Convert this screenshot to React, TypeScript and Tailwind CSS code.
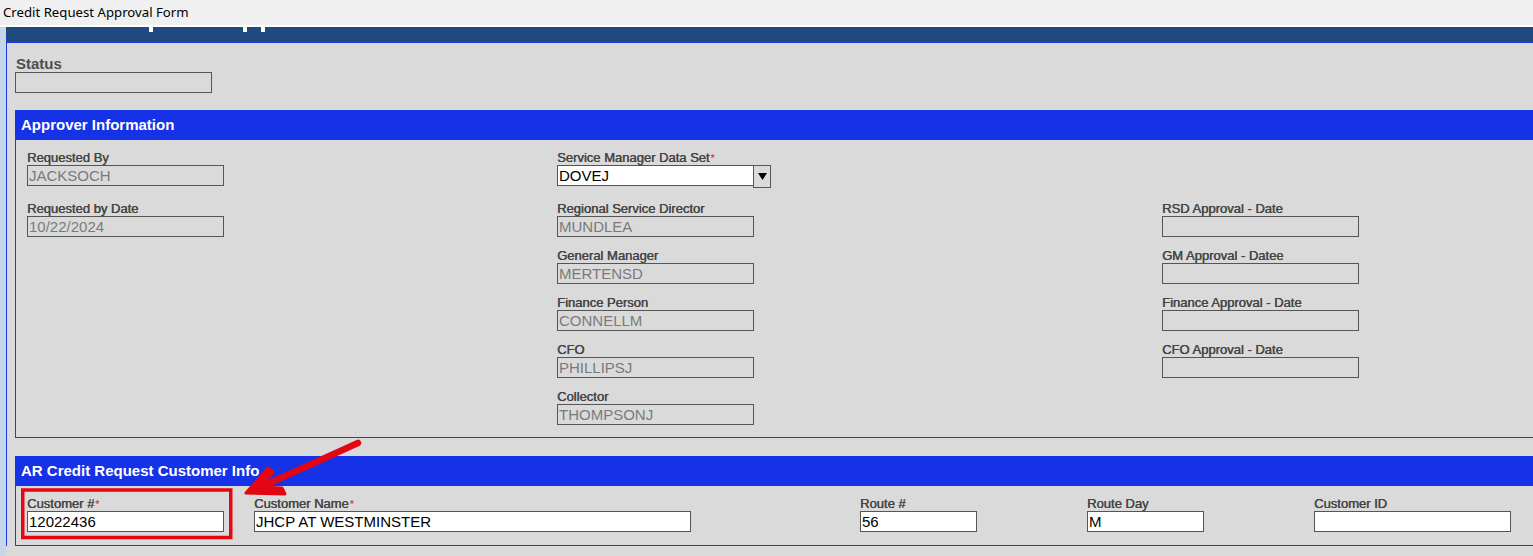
import React from "react";

const labelCls =
  "block h-[16px] leading-[18px] text-[13px] text-[#454545] whitespace-nowrap [text-shadow:0.45px_0_0_#454545]";

function Req() {
  return (
    <span className="inline-block text-[#e0141e] text-[11px] align-top leading-[12px] ml-[1px] translate-y-[3px] [text-shadow:none]">
      *
    </span>
  );
}

function ReadField({ label, value, w = "w-[197px]" }: { label: string; value?: string; w?: string }) {
  return (
    <div className="mb-[10px]">
      <span className={labelCls}>{label}</span>
      <div className={`${w} h-[21px] border border-[#555] bg-[#dadada] text-[15px] leading-[19px] pl-[1px] text-[#7a7a7a] whitespace-nowrap overflow-hidden`}>
        {value ?? ""}
      </div>
    </div>
  );
}

function EditField({ label, value, w, req = false }: { label: string; value?: string; w: string; req?: boolean }) {
  return (
    <div>
      <span className={labelCls}>
        {label}
        {req && <Req />}
      </span>
      <div className={`${w} h-[21px] border border-[#555] bg-white text-[15px] leading-[19px] pl-[1px] text-black whitespace-nowrap overflow-hidden`}>
        {value ?? ""}
      </div>
    </div>
  );
}

function SectionHeader({ title }: { title: string }) {
  return (
    <div className="h-[30px] bg-[#1632e6] flex items-center pl-[6px] text-white text-[15px] font-bold whitespace-nowrap">
      {title}
    </div>
  );
}

export default function App() {
  return (
    <div
      className="relative w-[1533px] h-[556px] overflow-hidden bg-[#dadada]"
      style={{ fontFamily: '"Liberation Sans", Arial, sans-serif' }}
    >
      {/* Window title bar */}
      <div
        className="h-[25px] bg-[#f0f0f0] flex items-center pl-[3px] text-[13.2px] text-black"
        style={{ fontFamily: '"Noto Sans", "Open Sans", sans-serif' }}
      >
        Credit Request Approval Form
      </div>
      <div className="h-[2px] bg-white" />

      <div className="flex">
        <div className="w-[6px] h-[529px] bg-[#c5d8ea] shrink-0" />
        <div className="flex-1 min-w-0">
          {/* Dark page header (scrolled) */}
          <div className="h-[15px] bg-[#204a7f] flex items-start">
            <div className="ml-[143px] w-[4px] h-[5px] bg-white" />
            <div className="ml-[90px] w-[4px] h-[5px] bg-white" />
            <div className="ml-[14px] w-[4px] h-[5px] bg-white" />
          </div>

          {/* Panel */}
          <div className="border-l border-t border-[#1a3be8] bg-[#dadada] pl-[8px] pt-[13px]">
            {/* Status */}
            <div>
              <span className="block h-[16px] leading-[16px] text-[15px] font-bold text-[#4d4d4d] pl-[1px]">Status</span>
              <div className="w-[197px] h-[21px] border border-[#555] bg-[#dadada]" />
            </div>

            {/* Approver Information */}
            <div className="mt-[17px]">
              <SectionHeader title="Approver Information" />
              <div className="border-l border-b border-[#1a3be8] pl-[11px] pt-[9px] pb-[2px] flex">
                <div className="w-[530px] shrink-0">
                  <div className="mb-[14px]">
                    <span className={labelCls}>Requested By</span>
                    <div className="w-[197px] h-[21px] border border-[#555] bg-[#dadada] text-[15px] leading-[19px] pl-[1px] text-[#7a7a7a]">
                      JACKSOCH
                    </div>
                  </div>
                  <ReadField label="Requested by Date" value="10/22/2024" />
                </div>
                <div className="w-[605px] shrink-0">
                  <div className="mb-[12px]">
                    <span className={labelCls}>
                      Service Manager Data Set
                      <Req />
                    </span>
                    <div className="flex items-start h-[23px]">
                      <div className="w-[197px] h-[21px] border border-[#555] bg-white text-[15px] leading-[19px] pl-[1px] text-black">
                        DOVEJ
                      </div>
                      <div className="-ml-[1px] w-[18px] h-[23px] border border-[#555] bg-[#dadada] flex items-center justify-center">
                        <svg width="9" height="7" viewBox="0 0 9 7">
                          <polygon points="0,0 9,0 4.5,7" fill="#000" />
                        </svg>
                      </div>
                    </div>
                  </div>
                  <ReadField label="Regional Service Director" value="MUNDLEA" />
                  <ReadField label="General Manager" value="MERTENSD" />
                  <ReadField label="Finance Person" value="CONNELLM" />
                  <ReadField label="CFO" value="PHILLIPSJ" />
                  <ReadField label="Collector" value="THOMPSONJ" />
                </div>
                <div className="flex-1">
                  <div className="h-[51px]" />
                  <ReadField label="RSD Approval - Date" />
                  <ReadField label="GM Approval - Datee" />
                  <ReadField label="Finance Approval - Date" />
                  <ReadField label="CFO Approval - Date" />
                </div>
              </div>
            </div>

            {/* AR Credit Request Customer Info */}
            <div className="mt-[18px]">
              <SectionHeader title="AR Credit Request Customer Info" />
              <div className="border-l border-b border-[#1a3be8] pl-[11px] pt-[9px] pb-[13px] flex">
                <div className="w-[227px] shrink-0">
                  <EditField label="Customer #" value="12022436" w="w-[197px]" req />
                </div>
                <div className="w-[606px] shrink-0">
                  <EditField label="Customer Name" value="JHCP AT WESTMINSTER" w="w-[437px]" req />
                </div>
                <div className="w-[227px] shrink-0">
                  <EditField label="Route #" value="56" w="w-[117px]" />
                </div>
                <div className="w-[227px] shrink-0">
                  <EditField label="Route Day" value="M" w="w-[117px]" />
                </div>
                <div className="flex-1">
                  <EditField label="Customer ID" w="w-[197px]" />
                </div>
              </div>
            </div>
          </div>
        </div>
      </div>

      {/* Red annotation overlay */}
      <svg className="absolute left-0 top-0 pointer-events-none" width="1533" height="556" viewBox="0 0 1533 556">
        <rect x="22.75" y="490" width="208" height="47.5" fill="none" stroke="#e30613" strokeWidth="3.5" />
        <line x1="358" y1="443" x2="254" y2="490" stroke="#e30613" strokeWidth="6.5" strokeLinecap="round" />
        <polygon
          points="268,468 246,493 285,494 282,488 262,487 273,472"
          fill="#e30613"
          stroke="#e30613"
          strokeWidth="3"
          strokeLinejoin="round"
        />
      </svg>
    </div>
  );
}
